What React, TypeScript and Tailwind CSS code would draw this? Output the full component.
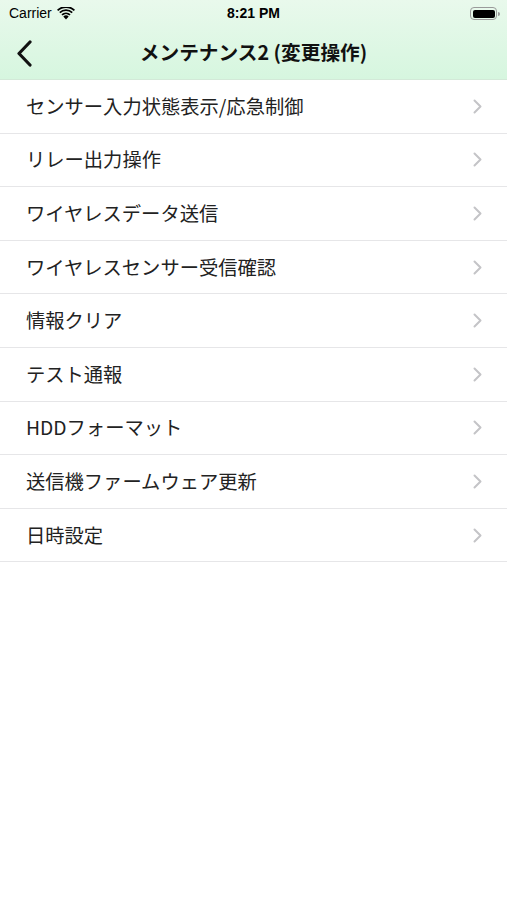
import React from "react";

const items = [
  "センサー入力状態表示/応急制御",
  "リレー出力操作",
  "ワイヤレスデータ送信",
  "ワイヤレスセンサー受信確認",
  "情報クリア",
  "テスト通報",
  "HDDフォーマット",
  "送信機ファームウェア更新",
  "日時設定",
];

const font = { fontFamily: '"Noto Sans CJK JP", "Liberation Sans", sans-serif' };

export default function App() {
  return (
    <div className="w-[507px] h-[900px] bg-white flex flex-col" style={font}>
      <div className="bg-gradient-to-b from-[#e9f9ec] to-[#d6f6df] border-b border-[#d3e9d8]">
        <div className="h-[27px] flex items-center justify-between pl-[9px] pr-[7px] relative">
          <div className="flex items-center gap-[5px] text-[14px] text-black" style={{ fontFamily: '"Liberation Sans", sans-serif' }}>
            <span>Carrier</span>
            <svg width="18" height="13" viewBox="0 0 18 13">
              <path d="M9 12.5 L6.3 9.4 A4 4 0 0 1 11.7 9.4 Z" fill="#000" />
              <path d="M4.4 7.3 A6.8 6.8 0 0 1 13.6 7.3 L12.4 8.6 A5 5 0 0 0 5.6 8.6 Z" fill="#000" />
              <path d="M2.2 5 A10 10 0 0 1 15.8 5 L14.6 6.3 A8.2 8.2 0 0 0 3.4 6.3 Z" fill="#000" />
              <path d="M0 2.7 A13 13 0 0 1 18 2.7 L16.8 4 A11.3 11.3 0 0 0 1.2 4 Z" fill="#000" />
            </svg>
          </div>
          <div className="absolute left-0 right-0 text-center text-[14px] font-bold text-black pointer-events-none" style={{ fontFamily: '"Liberation Sans", sans-serif' }}>
            8:21 PM
          </div>
          <div className="flex items-center">
            <div className="w-[27px] h-[13px] rounded-[4px] border border-[#9a9a9a] p-[1.5px]">
              <div className="w-full h-full rounded-[2px] bg-black" />
            </div>
            <div className="w-[2px] h-[4px] bg-[#9a9a9a] rounded-r-sm ml-[1px]" />
          </div>
        </div>
        <div className="h-[52px] flex items-center relative">
          <svg className="absolute left-[16px] top-[13px]" width="17" height="27" viewBox="0 0 17 27">
            <path d="M14 2 L3 13.5 L14 25" stroke="#111" strokeWidth="3.2" fill="none" strokeLinecap="round" strokeLinejoin="round" />
          </svg>
          <div className="w-full text-center text-[19.7px] font-bold text-[#111] leading-none -mt-[3px]">メンテナンス2 (変更操作)</div>
        </div>
      </div>
      <div className="flex flex-col">
        {items.map((t) => (
          <div key={t} className="h-[53.6px] flex items-center justify-between pl-[26px] pr-[26px] border-b border-[#e6e6e8]">
            <span className="text-[19.3px] text-[#222]">{t}</span>
            <svg width="9" height="15" viewBox="0 0 9 15" className="-mr-[1px]">
              <path d="M1.5 1.5 L7.5 7.5 L1.5 13.5" stroke="#c4c4c7" strokeWidth="2" fill="none" strokeLinecap="round" strokeLinejoin="round" />
            </svg>
          </div>
        ))}
      </div>
    </div>
  );
}
